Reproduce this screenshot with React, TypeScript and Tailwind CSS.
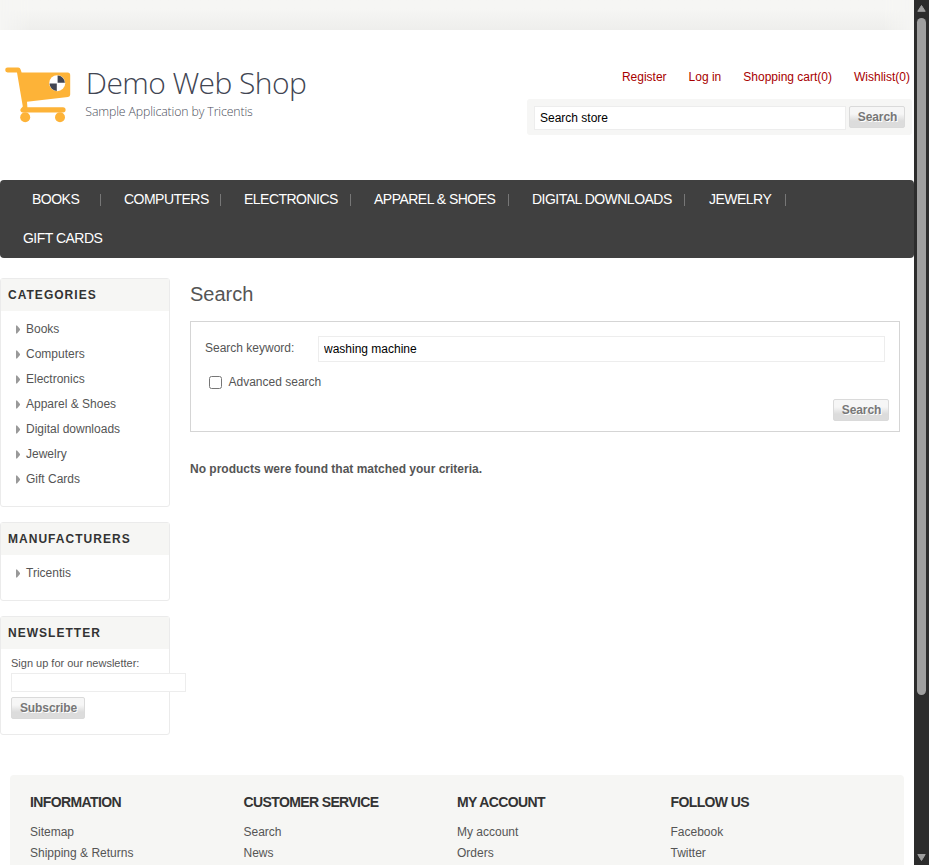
import React from 'react';

const NAV = [
  { label: 'Books', box: 'w-[101px] pl-8' },
  { label: 'Computers', box: 'w-[120px] pl-[23px]' },
  { label: 'Electronics', box: 'w-[130px] pl-[23px]' },
  { label: 'Apparel & Shoes', box: 'w-[158px] pl-[23px]' },
  { label: 'Digital downloads', box: 'w-[176px] pl-[23px]' },
  { label: 'Jewelry', box: 'w-[101px] pl-[24px]' },
];

const CATEGORIES = ['Books', 'Computers', 'Electronics', 'Apparel & Shoes', 'Digital downloads', 'Jewelry', 'Gift Cards'];

const FOOTER = [
  { title: 'Information', links: ['Sitemap', 'Shipping & Returns'] },
  { title: 'Customer service', links: ['Search', 'News'] },
  { title: 'My account', links: ['My account', 'Orders'] },
  { title: 'Follow us', links: ['Facebook', 'Twitter'] },
];

function Logo() {
  return (
    <svg width="320" height="70" viewBox="0 60 320 70" className="block">
      <g fill="#fdb338">
        <path d="M7.6 67.6H18.2Q20 67.6 20.6 69.4L21.6 72.6H67.6Q70.2 72.6 70.2 75.2V94.6Q70.2 96.8 68 97.1L27 101.8L27.4 107.2H63A2.6 2.6 0 0 1 63 112.4H22.6A2.2 2.2 0 0 1 21 108.6L22.8 106.4L17 72.4H7.6A2.4 2.4 0 0 1 7.6 67.6Z" />
        <circle cx="25.2" cy="117.2" r="5" />
        <circle cx="60" cy="117.2" r="5" />
      </g>
      <circle cx="57.2" cy="83.2" r="8" fill="#fff" />
      <path d="M57.6 82.8V75.5A7.6 7.6 0 0 1 64.9 82.8ZM56.8 83.6V90.9A7.6 7.6 0 0 1 49.5 83.6Z" fill="#414552" />
      <text x="85.8" y="94" textLength="221" fontSize="30" fontWeight="300" fill="#414552" fontFamily="Open Sans, sans-serif">Demo Web Shop</text>
      <text x="85.3" y="116" textLength="167.5" fontSize="12.3" fontWeight="300" fill="#4c4f5b" fontFamily="Open Sans, sans-serif">Sample Application by Tricentis</text>
    </svg>
  );
}

function Button({ children, className = '' }: { children: string; className?: string }) {
  return (
    <button className={`flex h-[22px] shrink-0 items-center justify-center rounded-[2px] border border-[#dadada] bg-linear-to-b from-[#f6f6f6] from-35% to-[#dcdcdc] to-70% pb-px pl-px text-[12px] leading-none font-bold tracking-[-0.1px] text-[#777] [text-shadow:1px_1px_0_#fff] ${className}`}>
      {children}
    </button>
  );
}

function Block({ title, className, children }: { title: string; className: string; children: React.ReactNode }) {
  return (
    <section className={`w-[170px] rounded-[3px] border border-[#ebebeb] ${className}`}>
      <h2 className="h-8 bg-[#f6f6f4] pl-[7px] text-[12px] leading-8 font-bold tracking-[1.03px] text-[#333] uppercase">{title}</h2>
      {children}
    </section>
  );
}

function LinkList({ items }: { items: string[] }) {
  return (
    <ul className="pt-[5px]">
      {items.map((item) => (
        <li key={item} className="flex h-[25px] items-center pl-[15px]">
          <svg width="4" height="9" viewBox="0 0 4 9" className="mt-px mr-[6px]">
            <path d="M0 0.5H1L4 4V5L1 8.5H0Z" fill="#999" />
          </svg>
          <a>{item}</a>
        </li>
      ))}
    </ul>
  );
}

function Scrollbar() {
  return (
    <div className="flex h-full w-[15px] shrink-0 flex-col items-center bg-[#2c2c2c]">
      <svg width="9" height="18" viewBox="0 0 9 18" className="shrink-0">
        <path d="M4.5 5.5L8.2 11.3H0.8Z" fill="#9f9f9f" stroke="#9f9f9f" strokeLinejoin="round" />
      </svg>
      <div className="h-[677px] w-[9px] rounded-full bg-[#9f9f9f]" />
      <svg width="9" height="12" viewBox="0 0 9 12" className="mt-auto">
        <path d="M0.8 1.5H8.2L4.5 7.5Z" fill="#9f9f9f" stroke="#9f9f9f" strokeLinejoin="round" />
      </svg>
    </div>
  );
}

export default function App() {
  return (
    <div className="flex h-[865px] w-[929px] overflow-hidden bg-white font-['Liberation_Sans',Arial,sans-serif] text-[12px] leading-[14px] text-[#555]">
      <div className="h-full w-[914px] shrink-0 overflow-hidden">
        <div className="h-[30px] bg-[#f6f6f4]">
          <div className="h-full bg-linear-to-b from-[#f6f6f4] from-30% to-[#eeeeec] [mask-image:linear-gradient(to_right,transparent,black_30px,black_884px,transparent)]" />
        </div>

        <header className="flex h-[150px] justify-between pt-[30px]">
          <Logo />
          <div className="flex w-[387px] flex-col items-start">
            <nav className="flex h-[39px] w-[383px] justify-end gap-[22px] pt-[10px] text-[#a80000]">
              <a>Register</a>
              <a>Log in</a>
              <a>Shopping cart(0)</a>
              <a>Wishlist(0)</a>
            </nav>
            <div className="flex h-9 w-[385px] gap-[3px] rounded-[3px] bg-[#f6f6f5] pt-[7px] pl-[7px]">
              <input defaultValue="Search store" className="h-6 w-[312px] border border-[#ededed] bg-white px-[5px] text-black" />
              <Button className="w-14">Search</Button>
            </div>
          </div>
        </header>

        <nav className="h-[78px] rounded-[4px] bg-[#404040] text-[14px] tracking-[-0.52px] text-white uppercase">
          <ul className="flex h-[39px] items-center">
            {NAV.map((n) => (
              <li key={n.label} className={`h-3 shrink-0 border-r border-[#777] leading-[10px] whitespace-nowrap ${n.box}`}>
                {n.label}
              </li>
            ))}
          </ul>
          <a className="block pl-[23px] leading-[39px]">Gift Cards</a>
        </nav>

        <main className="flex h-[517px] pt-5">
          <aside className="w-[190px] shrink-0">
            <Block title="Categories" className="h-[229px]">
              <LinkList items={CATEGORIES} />
            </Block>
            <Block title="Manufacturers" className="mt-[15px] h-[79px]">
              <LinkList items={['Tricentis']} />
            </Block>
            <Block title="Newsletter" className="mt-[15px] h-[119px]">
              <div className="pt-2 pl-[10px]">
                <label className="block text-[11px] leading-[13px] whitespace-nowrap">Sign up for our newsletter:</label>
                <input className="mt-[3px] block h-[19px] w-[175px] border border-[#ededed] bg-white" />
                <Button className="mt-[5px] w-[74px]">Subscribe</Button>
              </div>
            </Block>
          </aside>

          <section className="w-[710px]">
            <h1 className="h-[43px] text-[20px] leading-8">Search</h1>
            <form className="flex h-[111px] flex-col border border-[#d5d5d5] pr-[14px] pl-[14px]">
              <div className="flex pt-[14px]">
                <label className="w-[113px] pt-[5px]">Search keyword:</label>
                <input defaultValue="washing machine" className="h-[26px] w-[567px] border border-[#ededed] bg-white px-[5px] text-black" />
              </div>
              <label className="mt-[12px] flex h-[17px] items-center gap-[6.5px] pl-1">
                <input type="checkbox" className="size-[13px]" />
                <span className="-mt-px">Advanced search</span>
              </label>
              <Button className="mt-2 -mr-[4px] w-14 self-end">Search</Button>
            </form>
            <p className="pt-[30px] font-bold">No products were found that matched your criteria.</p>
          </section>
        </main>

        <footer className="mx-[10px] flex h-[110px] rounded-t-[4px] bg-[#f6f6f4] pt-[19px] pl-5">
          {FOOTER.map((col) => (
            <div key={col.title} className="w-[213.5px] shrink-0">
              <h3 className="h-7 text-[14px] leading-4 font-bold tracking-[-0.62px] text-[#333] uppercase">{col.title}</h3>
              {col.links.map((l) => (
                <a key={l} className="block h-[21px] leading-[21px]">{l}</a>
              ))}
            </div>
          ))}
        </footer>
      </div>
      <Scrollbar />
    </div>
  );
}
